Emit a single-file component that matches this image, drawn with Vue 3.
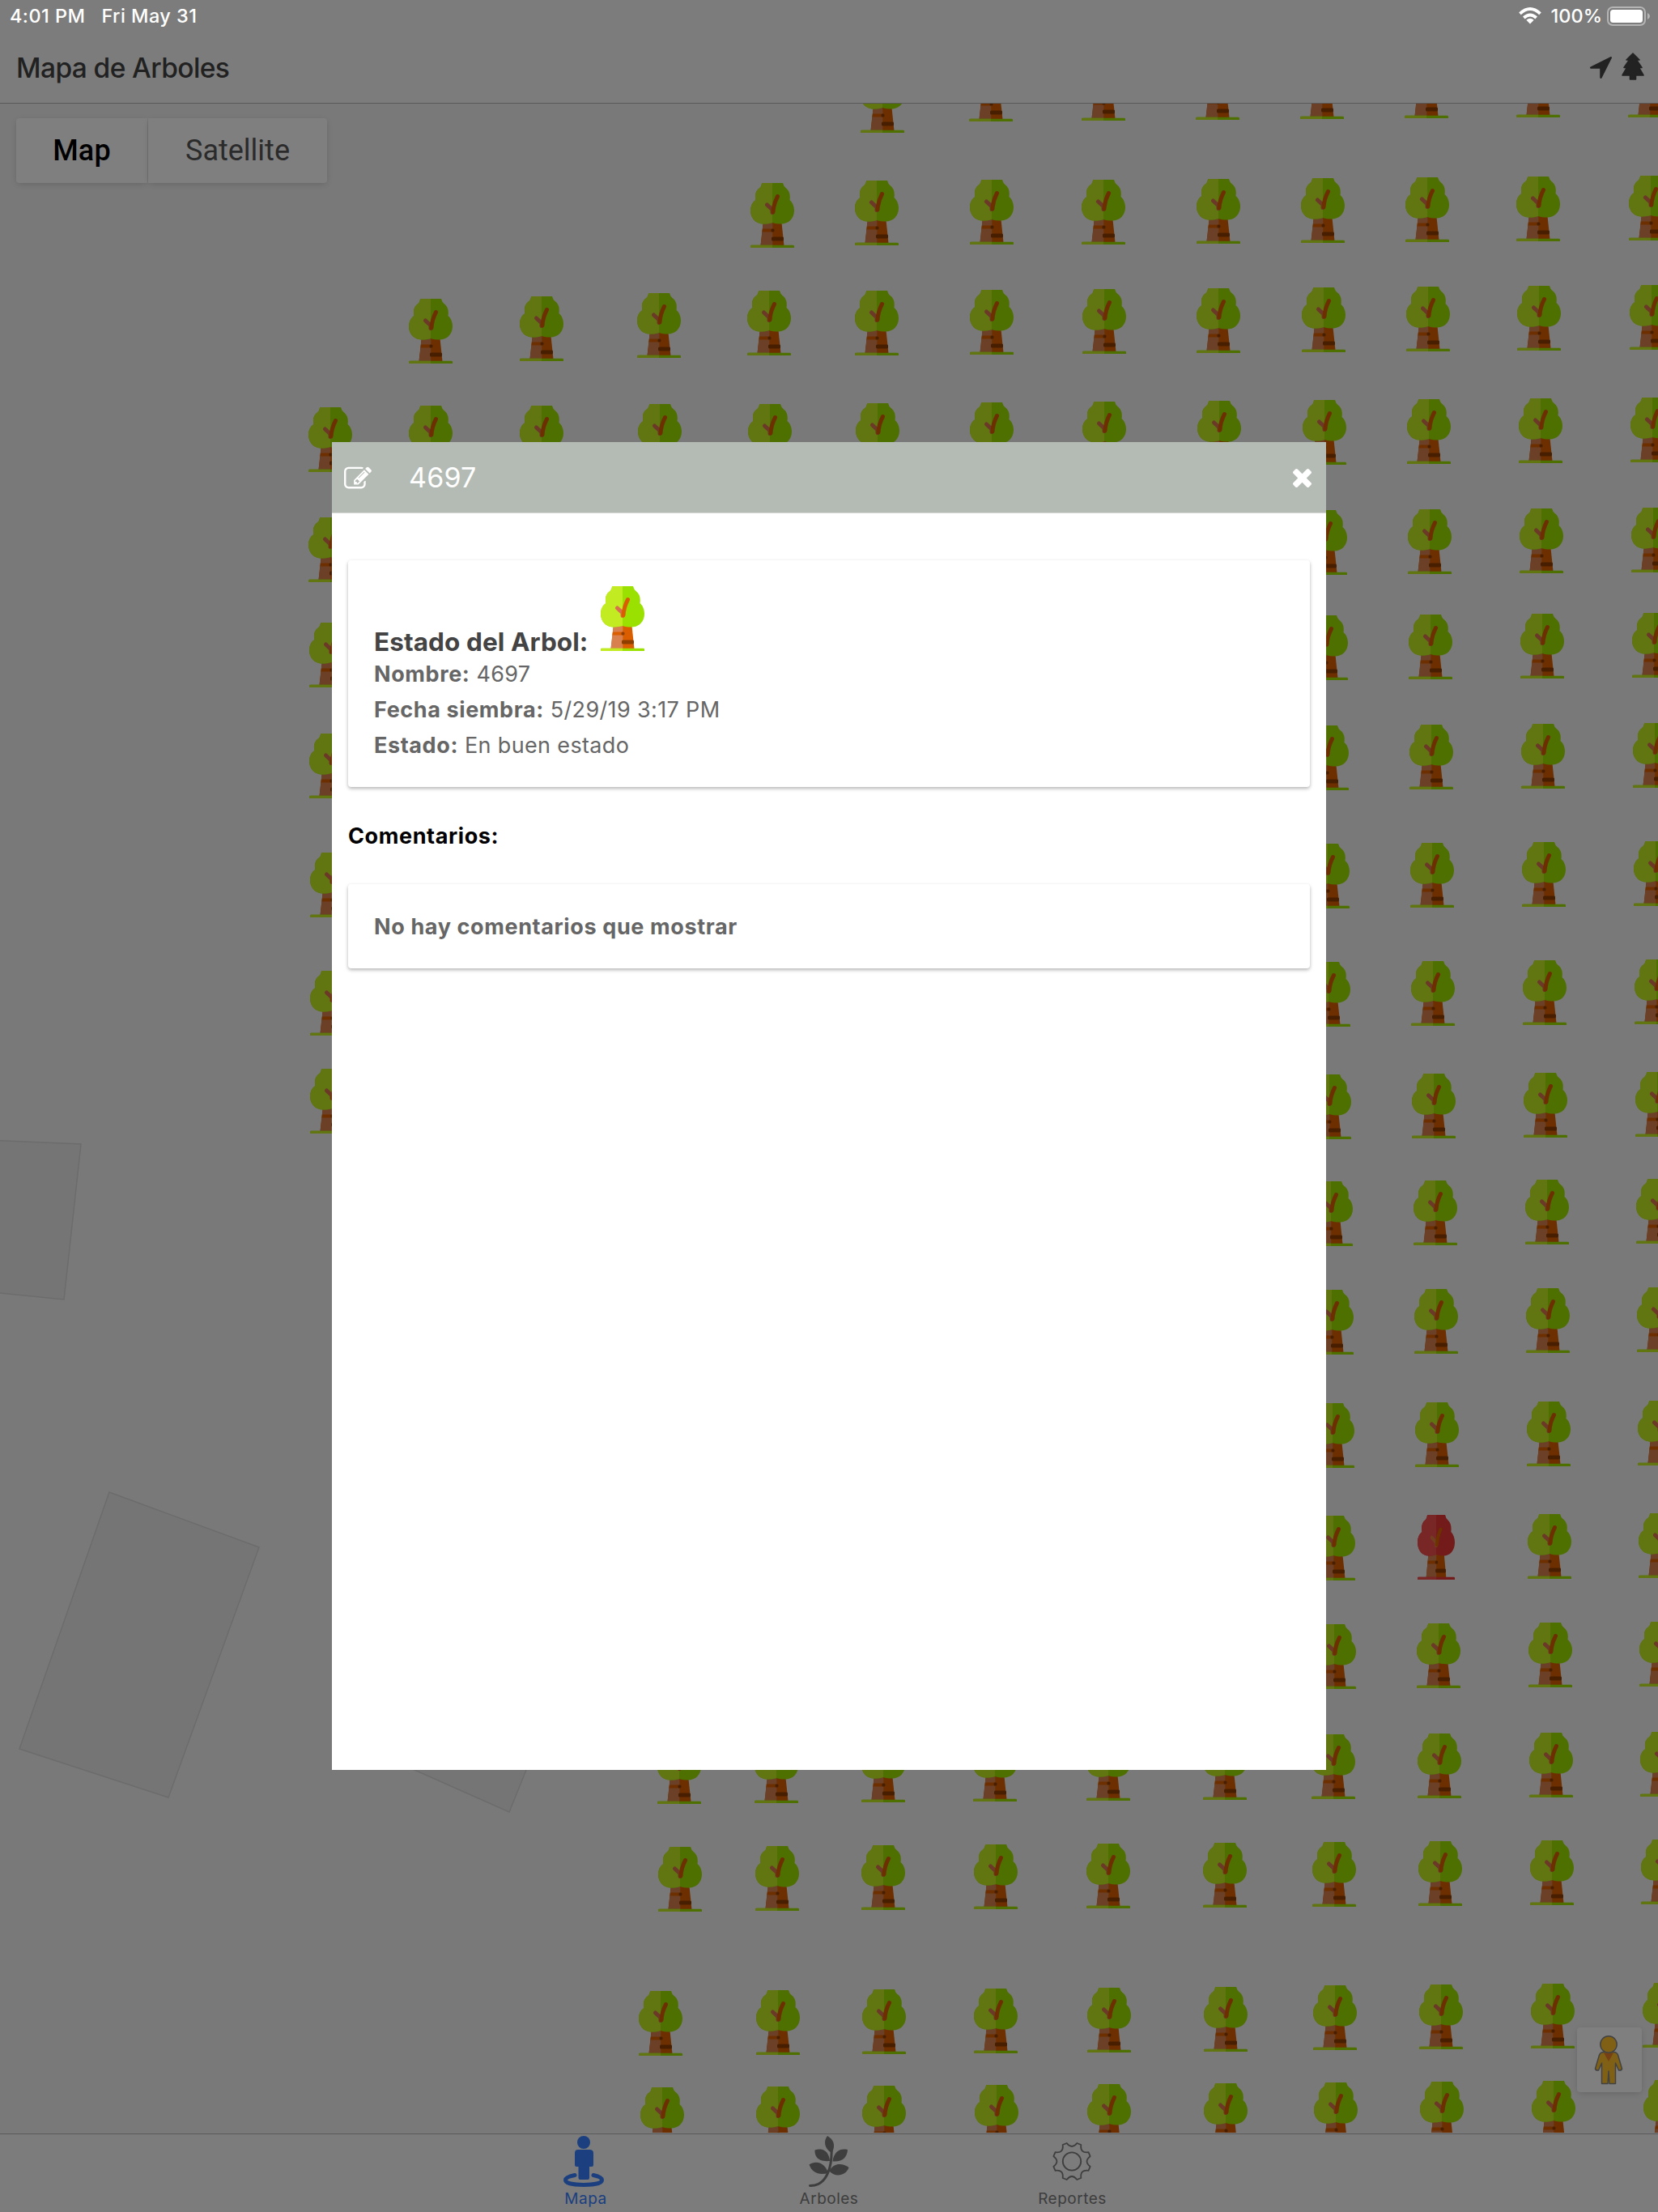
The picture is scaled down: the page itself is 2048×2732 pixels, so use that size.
<script setup>
// [left, top] of every marker, in map pixels, one array per planted row
const upperRows = [
  [[1063, 84], [1197, 70], [1336, 69], [1477, 68], [1606, 67], [1735, 66], [1873, 65], [2011, 65]],
  [[927, 226], [1056, 223], [1198, 222], [1336, 222], [1478, 221], [1607, 220], [1736, 219], [1873, 218], [2012, 217]],
  [[505, 369], [642, 366], [787, 362], [923, 359], [1056, 359], [1198, 358], [1337, 357], [1478, 356], [1608, 355], [1737, 354], [1874, 353], [2013, 352]],
  [[381, 503], [505, 501], [642, 501], [788, 499], [924, 499], [1057, 498], [1198, 497], [1337, 496], [1479, 495], [1609, 494], [1738, 493], [1876, 492], [2014, 491]]
]
const leftColumn = [[381, 639], [382, 769], [382, 906], [383, 1053], [383, 1199], [383, 1320]]
const rightTops = [629, 759, 895, 1041, 1187, 1326, 1458, 1592, 1732, 1871, 2005]
const rightRows = rightTops.map((top, i) => {
  const shift = i >= 6 ? i + 1 : i
  return [
    [1610 + shift, top + 1],
    [1739 + shift, top],
    [1877 + shift, top - 1],
    [2015 + i, top - 2]
  ]
})
const lowerRows = [
  [[812, 2148], [932, 2147], [1064, 2146], [1202, 2145], [1342, 2144], [1486, 2143], [1620, 2142], [1751, 2141], [1889, 2140], [2026, 2139]],
  [[813, 2281], [933, 2280], [1064, 2279], [1203, 2278], [1342, 2277], [1486, 2276], [1621, 2275], [1752, 2274], [1890, 2273], [2027, 2272]],
  [[789, 2459], [934, 2458], [1065, 2457], [1203, 2456], [1343, 2455], [1487, 2454], [1622, 2452], [1753, 2451], [1891, 2450], [2029, 2449]],
  [[791, 2578], [934, 2577], [1065, 2576], [1204, 2575], [1343, 2574], [1487, 2573], [1623, 2572], [1754, 2571], [1892, 2570], [2030, 2569]]
]
const all = [...upperRows.flat(), ...leftColumn, ...rightRows.flat(), ...lowerRows.flat()]
const sick = [rightRows[9][1]]
const healthy = all.filter((t) => !sick.includes(t))

const facts = [
  { label: 'Nombre:', value: '4697' },
  { label: 'Fecha siembra:', value: '5/29/19 3:17 PM' },
  { label: 'Estado:', value: 'En buen estado' }
]
</script>

<template>
  <div class="screen">
    <svg class="defs" width="0" height="0">
      <defs>
        <clipPath id="leftHalf"><rect x="0" y="0" width="27" height="80" /></clipPath>
        <g id="crown">
          <path d="M14.3 0H40Q41 4 43.5 6C48 9.500 49.500 14 48.500 21C52 24 54 29 54 34C54 44 47 50.500 38 50.500C34 50.500 30 50 27 49C24 50 20 50.500 16 50.500C7 50.500 0 44 0 34C0 29 2 24 6.500 21C5 14 6.500 9.500 11.500 6Q13.500 4 14.300 0Z" />
          <path d="M1.500 76.700H52.500Q54 76.700 54 78V80H0V78Q0 76.700 1.500 76.700Z" />
        </g>
        <g id="wood">
          <path d="M15.700 49H38.500L41.500 77.500H12.500Z" fill="#da5e00" />
          <path d="M15.700 49H27.300V77.500H12.500Z" fill="#d8804e" />
          <path d="M15 56.500H27.300V60.500H14.600Z" fill="#da5e00" />
          <rect x="25.500" y="56.500" width="4" height="4" rx="1.500" fill="#8f3e00" />
          <rect x="26" y="66.500" width="15" height="5" rx="1.500" fill="#8f3e00" />
        </g>
        <g id="branch" fill="none" stroke-linecap="round" stroke-linejoin="round">
          <path d="M20.500 27L27 33V36.500" stroke="#d8704e" stroke-width="5" />
          <path d="M33.500 16.500Q28.500 26 28 36" stroke="#da5e00" stroke-width="5" />
        </g>
        <g id="tree">
          <use href="#wood" />
          <use href="#crown" fill="#9ae000" />
          <use href="#crown" fill="#c2eb21" clip-path="url(#leftHalf)" />
          <use href="#branch" />
        </g>
        <g id="sickTree" transform="scale(.852 1)">
          <use href="#wood" />
          <use href="#crown" fill="#e63434" />
          <use href="#crown" fill="#f24c4c" clip-path="url(#leftHalf)" />
          <g fill="none" stroke-linecap="round" stroke-linejoin="round" stroke-width="4.500">
            <path d="M20.500 28L27 34V38" stroke="#e27c40" />
            <path d="M33.500 18Q28.500 27 28 37" stroke="#da6400" />
          </g>
        </g>
      </defs>
    </svg>

    <header class="toolbar">
      <h1>Mapa de Arboles</h1>
      <div class="actions">
        <svg width="27" height="27" viewBox="192 256 1410 1410"><path d="M1593 349l-640 1280q-17 35-57 35-5 0-15-2-22-5-35.500-22.500t-13.500-39.500v-576h-576q-22 0-39.500-13.500t-22.500-35.500 4-42 29-30l1280-640q13-7 29-7 27 0 45 19 15 14 18.500 34.500t-6.500 39.500z" /></svg>
        <svg class="pine" width="28" height="34" viewBox="0 0 28 34"><path d="M14 1L22 9H18.500L25 18.500H21.500L27 28H17.500V33H10.500V28H1L6.500 18.500H3L9.500 9H6Z" stroke="#444" stroke-width="1.600" stroke-linejoin="round" /></svg>
      </div>
    </header>

    <main class="map">
      <svg class="canvas" width="2048" height="2506" viewBox="0 128 2048 2506">
        <g fill="#ebebeb" stroke="#d8d8d8" stroke-width="1.500">
          <path d="M-4 1408.500L100 1413L79 1605L-4 1596.500Z" />
          <path d="M135 1843L320 1911L208 2220L24 2160Z" />
          <path d="M412 2141L512 2186L629 2238L650 2186L670 2140Z" />
        </g>
        <use v-for="(t, i) in healthy" :key="'h' + i" href="#tree" :x="t[0]" :y="t[1]" />
        <g v-for="(t, i) in sick" :key="'s' + i" :transform="`translate(${t[0] + 2} ${t[1]})`"><use href="#sickTree" /></g>
      </svg>
      <div class="types">
        <button class="type on">Map</button>
        <button class="type">Satellite</button>
      </div>
      <div class="pegman">
        <svg width="80" height="80" viewBox="0 0 80 80" stroke="#858585" stroke-width="1.500" stroke-linejoin="round">
          <path d="M33 30.500H45Q49 30.500 50.500 34L55.500 51Q55 53.500 51.500 53L47.500 44V69.500H40L39 54L38 69.500H30.500V44L26.500 53Q23 53.500 22.500 51L27.500 34Q29 30.500 33 30.500Z" fill="#ffc028" />
          <path d="M33 31.500H45L39 42Z" fill="#ee8028" stroke="none" />
          <circle cx="39" cy="21" r="10.200" fill="#ffc028" />
        </svg>
      </div>
    </main>

    <nav class="tabs">
      <a class="tab on">
        <svg class="person" width="50" height="63" viewBox="0 0 50 63">
          <ellipse cx="25" cy="8" rx="8" ry="8" />
          <path d="M18 17H32Q37 17 37 21V36Q37 38 35 38H32V52Q32 54 30 54H20.500Q18.500 54 18.500 52V38H16Q14 38 14 36V21Q14 17 18 17Z" />
          <path d="M14 48.500C6 50 2.500 52 2.500 54.500C2.500 58.500 12 60.500 25 60.500S47.500 58.500 47.500 54.500C47.500 52 44 50 37 48.500" fill="none" stroke="currentColor" stroke-width="5" stroke-linecap="round" />
        </svg>
        <span>Mapa</span>
      </a>
      <a class="tab">
        <svg width="50" height="63" viewBox="0 0 50 63">
          <path d="M23 0C30 4 34 11 28.500 21C19 16 18 6 23 0Z" />
          <path d="M7.500 17.500C17 14 25 19 26 31C15 32 7 28 7.500 17.500Z" />
          <path d="M48 17C39 15 31 19 29.500 31.500C42 32.500 47.500 26 48 17Z" />
          <path d="M.5 35.500C9 29.500 20 33 24 46C12 49 4 45 .5 35.500Z" />
          <path d="M49.500 39C41 33 30 33.500 25.500 43.500C33 52 46 49 49.500 39Z" />
          <path d="M28 15C29 35 24 62 1.500 61.500" fill="none" stroke="currentColor" stroke-width="3" stroke-linecap="round" />
        </svg>
        <span>Arboles</span>
      </a>
      <a class="tab">
        <svg class="gear" width="50" height="63" viewBox="0 0 50 63" fill="none" stroke="currentColor" stroke-width="1.800" stroke-linejoin="round">
          <path d="M18.700 9Q25 17 31.300 9L36.300 11Q35 21.500 45.500 20.200L47.600 25.200Q39.500 31.500 47.600 37.800L45.500 42.800Q35 41.500 36.300 52L31.300 54Q25 46 18.700 54L13.700 52Q15 41.500 4.500 42.800L2.400 37.800Q10.500 31.500 2.400 25.200L4.500 20.200Q15 21.500 13.700 11Z" />
          <circle cx="25" cy="31.500" r="11.200" />
        </svg>
        <span>Reportes</span>
      </a>
    </nav>

    <div class="backdrop">
      <section class="modal">
        <header class="modal-head">
          <svg class="edit" width="34" height="28" viewBox="0 110 1792 1440"><path d="M888 1184l116-116-152-152-116 116v56h96v96h56zm440-720q-16-16-33 1l-350 350q-17 17-1 33t33-1l350-350q17-17 1-33zm80 594v190q0 119-84.500 203.500t-203.500 84.500h-832q-119 0-203.500-84.500t-84.500-203.500v-832q0-119 84.500-203.500t203.500-84.500h832q63 0 117 25 15 7 18 23 3 17-9 29l-49 49q-14 14-32 8-23-6-45-6h-832q-66 0-113 47t-47 113v832q0 66 47 113t113 47h832q66 0 113-47t47-113v-126q0-13 9-22l64-64q15-15 35-7t20 29zm-96-738l288 288-672 672h-288v-288zm444 132l-92 92-288-288 92-92q28-28 68-28t68 28l152 152q28 28 28 68t-28 68z" /></svg>
          <h2>4697</h2>
          <svg class="close" width="23" height="23" viewBox="302 366 1188 1188"><path d="M1490 1322q0 40-28 68l-136 136q-28 28-68 28t-68-28l-294-294-294 294q-28 28-68 28t-68-28l-136-136q-28-28-28-68t28-68l294-294-294-294q-28-28-28-68t28-68l136-136q28-28 68-28t68 28l294 294 294-294q28-28 68-28t68 28l136 136q28 28 28 68t-28 68l-294 294 294 294q28 28 28 68z" /></svg>
        </header>
        <div class="card state">
          <div class="state-title">
            <strong>Estado del Arbol:</strong>
            <svg width="54" height="80" viewBox="0 0 54 80"><use href="#tree" /></svg>
          </div>
          <p v-for="f in facts" :key="f.label"><b>{{ f.label }}</b> {{ f.value }}</p>
        </div>
        <h3>Comentarios:</h3>
        <div class="card empty">No hay comentarios que mostrar</div>
      </section>
    </div>

    <div class="status">
      <span class="time">4:01 PM</span>
      <span class="date">Fri May 31</span>
      <svg class="wifi" width="28" height="21" viewBox="0 0 28 21" fill="none" stroke="#fff" stroke-width="3.800">
        <path d="M1.500 7.800Q14-3.800 26.500 7.800" />
        <path d="M6.300 13Q14 6 21.700 13" />
        <path d="M14 20.500L9.300 15.800Q14 11.800 18.700 15.800Z" fill="#fff" stroke="none" />
      </svg>
      <span class="pct">100%</span>
      <svg class="battery" width="53" height="24" viewBox="0 0 53 24">
        <rect x="1" y="1" width="46" height="22" rx="6" fill="none" stroke="#b4b4b4" stroke-width="2" />
        <rect x="4" y="4" width="40" height="16" rx="3.500" fill="#fff" />
        <path d="M50 8Q53 9.500 53 12T50 16Z" fill="#b4b4b4" />
      </svg>
    </div>
  </div>
</template>

<style>
body {
  margin: 0;
}
</style>

<style scoped>
.screen {
  position: relative;
  display: flex;
  flex-direction: column;
  width: 2048px;
  height: 2732px;
  overflow: hidden;
  background: #f8f8f8;
  font-family: Inter, "Liberation Sans", sans-serif;
}
.defs {
  position: absolute;
}
h1, h2, h3, p {
  margin: 0;
  font-weight: 400;
}
.toolbar {
  flex: none;
  box-sizing: border-box;
  height: 128px;
  padding: 40px 17px 0 20px;
  display: flex;
  align-items: center;
  justify-content: space-between;
  border-bottom: 1px solid #b2b2b2;
  color: #424242;
}
h1 {
  font-size: 33.500px;
  font-weight: 500;
  letter-spacing: -0.600px;
}
.actions {
  display: flex;
  align-items: center;
  gap: 12px;
  fill: #444;
}
.pine {
  margin-top: -3px;
}
.map {
  flex: none;
  position: relative;
  height: 2506px;
  background: #f2f2f2;
}
.canvas {
  display: block;
}
.types {
  position: absolute;
  left: 20px;
  top: 18px;
  display: flex;
  gap: 1px;
}
.type {
  width: 221px;
  height: 80px;
  padding: 0;
  border: 0;
  border-radius: 0 4px 4px 0;
  background: #fff;
  box-shadow: 0 2px 8px -2px rgba(0, 0, 0, 0.22);
  font: 400 36px Roboto, sans-serif;
  color: #565656;
}
.type.on {
  width: 162px;
  border-radius: 4px 0 0 4px;
  font-weight: 500;
  letter-spacing: 0.200px;
  color: #000;
}
.pegman {
  position: absolute;
  left: 1948px;
  top: 2376px;
  width: 80px;
  height: 80px;
  border-radius: 4px;
  background: #fff;
  box-shadow: 0 2px 8px -2px rgba(0, 0, 0, 0.22);
}
.tabs {
  flex: 1;
  display: flex;
  justify-content: center;
  margin-top: 1px;
  border-top: 1px solid #b2b2b2;
}
.tab {
  width: 300.500px;
  display: flex;
  flex-direction: column;
  align-items: center;
  padding-top: 2px;
  color: #7c7c7c;
  font-size: 19px;
  line-height: 24px;
  letter-spacing: 0.500px;
}
.tab svg {
  fill: currentColor;
}
.tab svg.gear {
  margin-right: 1px;
  fill: none;
}
.tab svg.person {
  margin-right: 5px;
}
.tab span {
  margin-top: 3px;
}
.tab.on {
  color: #3880ff;
}
.backdrop {
  position: absolute;
  inset: 0;
  display: flex;
  align-items: center;
  justify-content: center;
  background: rgba(0, 0, 0, 0.5);
}
.modal {
  width: 1228px;
  height: 1640px;
  background: #fff;
}
.modal-head {
  box-sizing: border-box;
  height: 88px;
  padding: 0 18px 0 15px;
  display: flex;
  align-items: center;
  background: #b4bab4;
  border-bottom: 1px solid #d5d8d5;
  fill: #fff;
  color: #fff;
}
h2 {
  flex: 1;
  margin-left: 46px;
  font-size: 34px;
  letter-spacing: 0.200px;
}
.close {
  margin-top: 2px;
}
.card {
  box-sizing: border-box;
  width: 1188px;
  margin-left: 20px;
  padding-left: 32px;
  border-radius: 4px;
  background: #fff;
  box-shadow: 0 2px 4px rgba(0, 0, 0, 0.3);
  color: #666;
  font-size: 27px;
}
.state {
  height: 280px;
  margin-top: 58px;
  padding-top: 32px;
}
.state-title {
  display: flex;
  align-items: baseline;
  gap: 16px;
  height: 87px;
  color: #444;
  font-size: 31.500px;
  letter-spacing: 0.080px;
}
.card p {
  line-height: 44px;
  letter-spacing: 0.350px;
}
b, strong {
  font-weight: 700;
}
b {
  letter-spacing: 0.600px;
}
h3 {
  margin: 44px 0 42px 20px;
  font-size: 27px;
  line-height: 34px;
  font-weight: 700;
  letter-spacing: 0.600px;
  color: #000;
}
.empty {
  height: 104px;
  line-height: 106px;
  font-weight: 700;
  letter-spacing: 0.620px;
}
.status {
  position: absolute;
  inset: 0 0 auto;
  height: 39px;
  padding: 0 10px 0 12px;
  display: flex;
  align-items: center;
  color: #fff;
  font-size: 23.500px;
  font-weight: 500;
}
.time, .date {
  letter-spacing: 0.450px;
}
.date {
  flex: 1;
  margin-left: 20px;
}
.pct {
  margin: 0 6px 0 12px;
}
</style>
